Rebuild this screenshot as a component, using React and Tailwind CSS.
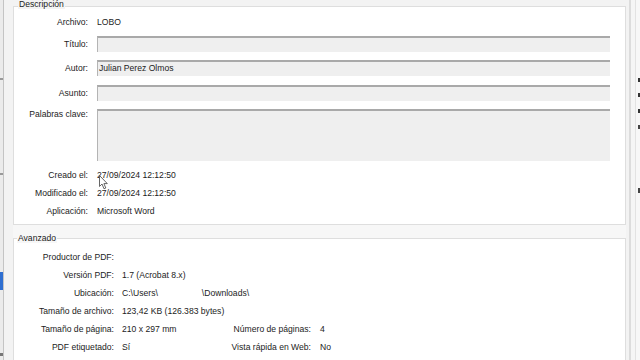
import React from 'react';

const fieldBox = 'bg-[#efefef] border-t-2 border-l border-t-[#a9a9a9] border-l-[#b4b4b4]';

const Label = ({ children, w = 'w-[74px]' }) => (
  <div className={`${w} shrink-0 text-right whitespace-nowrap leading-[10px]`}>{children}</div>
);

const DescRow = ({ label, children, className = '' }) => (
  <div className={`flex items-center h-[16px] ${className}`}>
    <Label>{label}</Label>
    <div className="ml-[9px] leading-[10px]">{children}</div>
  </div>
);

const InputRow = ({ label, value, className = '' }) => (
  <div className={`flex items-center h-[16px] ${className}`}>
    <Label>{label}</Label>
    <div className={`ml-[9px] w-[513px] h-[16px] ${fieldBox} pl-[1px] leading-[10px] flex items-start`}>
      {value && <span className="mt-[1px]">{value}</span>}
    </div>
  </div>
);

const AdvRow = ({ label, value, label2, value2 }) => (
  <div className="flex items-center h-[18px] leading-[10px] whitespace-nowrap">
    <div className="w-[100px] shrink-0 flex justify-end">{label}</div>
    {label2 ? (
      <>
        <div className="ml-[8px] w-[110px] shrink-0">{value}</div>
        <div className="w-[79px] shrink-0 flex justify-end">{label2}</div>
        <div className="ml-[9px]">{value2}</div>
      </>
    ) : (
      <div className="ml-[8px] flex">{value}</div>
    )}
  </div>
);

export default function App() {
  return (
    <div className="relative w-[640px] h-[360px] overflow-hidden flex bg-[#f3f3f3] text-[8.6px] text-[#1c1c1c] font-['Liberation_Sans',Arial,sans-serif]">
      {/* window behind, left edge */}
      <div className="w-[13px] shrink-0 flex">
        <div className="w-[3px] bg-[#ebebeb] flex flex-col">
          <div className="h-[78px]" />
          <div className="h-[2px] bg-[#9a9a9a]" />
          <div className="h-[93px]" />
          <div className="h-[2px] bg-[#9a9a9a]" />
          <div className="h-[97px]" />
          <div className="h-[18px] bg-[#2f6fd1]" />
          <div className="h-[63px]" />
          <div className="h-[3px] bg-[#777]" />
        </div>
        <div className="w-px bg-[#c4c4c4]" />
        <div className="flex-1 bg-[#f3f3f3]" />
      </div>

      {/* dialog content */}
      <div className="w-[613px] shrink-0 pt-[6px] flex flex-col">
        <div className="relative h-[219px] bg-white border border-[#dedede] flex flex-col">
          <div className="absolute left-[4px] top-[-8px] px-px bg-[#f3f3f3] leading-[10px]">Descripción</div>
          <DescRow label="Archivo:" className="mt-[7px]">LOBO</DescRow>
          <InputRow label="Título:" className="mt-[6px]" />
          <InputRow label="Autor:" value="Julian Perez Olmos" className="mt-[8px]" />
          <InputRow label="Asunto:" className="mt-[9px]" />
          <div className="flex items-start mt-[8px]">
            <Label>Palabras clave:</Label>
            <div className={`ml-[9px] w-[513px] h-[52px] ${fieldBox}`} />
          </div>
          <DescRow label="Creado el:" className="mt-[6px]">27/09/2024 12:12:50</DescRow>
          <DescRow label="Modificado el:" className="mt-[2px]">27/09/2024 12:12:50</DescRow>
          <DescRow label="Aplicación:" className="mt-[2px]">Microsoft Word</DescRow>
        </div>

        <div className="h-[13px] bg-[#f7f7f7]" />

        <div className="relative flex-1 bg-white border border-[#dedede] border-b-0 pt-[9px] flex flex-col">
          <div className="absolute left-[3px] top-[-6px] px-px bg-[#f7f7f7] leading-[10px]">Avanzado</div>
          <AdvRow label="Productor de PDF:" value="" />
          <AdvRow label="Versión PDF:" value="1.7 (Acrobat 8.x)" />
          <AdvRow
            label="Ubicación:"
            value={
              <>
                <span>C:\Users\</span>
                <span className="w-[44px]" />
                <span>\Downloads\</span>
              </>
            }
          />
          <AdvRow label="Tamaño de archivo:" value="123,42 KB (126.383 bytes)" />
          <AdvRow label="Tamaño de página:" value="210 x 297 mm" label2="Número de páginas:" value2="4" />
          <AdvRow label="PDF etiquetado:" value="Sí" label2="Vista rápida en Web:" value2="No" />
        </div>
      </div>

      {/* right edge of dialog and window behind */}
      <div className="flex-1 flex">
        <div className="w-[3px] bg-[#f3f3f3]" />
        <div className="w-[2px] bg-[#dcdcdc]" />
        <div className="w-[4px] bg-[#f5f5f5]" />
        <div className="w-px bg-[#e2e2e2]" />
        <div className="flex-1 bg-[#f7f7f7] flex flex-col items-end">
          <div className="h-[78px]" />
          <div className="w-[2px] h-[4px] bg-[#333]" />
          <div className="h-[11px]" />
          <div className="w-[2px] h-[4px] bg-[#333]" />
          <div className="h-[12px]" />
          <div className="w-[2px] h-[4px] bg-[#333]" />
          <div className="h-[12px]" />
          <div className="w-[2px] h-[4px] bg-[#444]" />
          <div className="h-[59px]" />
          <div className="w-[2px] h-[5px] bg-[#444]" />
        </div>
      </div>

      {/* mouse pointer */}
      <svg className="absolute left-[99px] top-[175px]" width="10" height="15" viewBox="0 0 10 15">
        <path
          d="M0.5 0.5 L0.5 11.5 L3 9 L5 13.8 L6.8 13 L4.9 8.6 L8.3 8.6 Z"
          fill="#fff"
          stroke="#555"
          strokeWidth="0.9"
          strokeLinejoin="round"
        />
      </svg>
    </div>
  );
}
